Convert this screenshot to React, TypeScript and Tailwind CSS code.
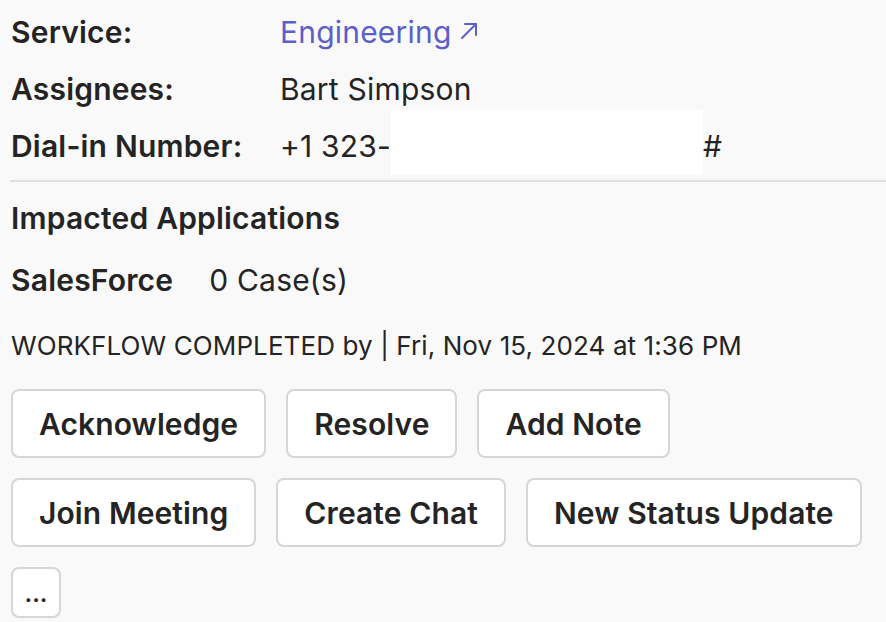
const font = { fontFamily: 'Inter, "Noto Sans", "Liberation Sans", sans-serif' }

function ActionButton({ label }: { label: string }) {
  return (
    <button className="h-[69px] px-[26px] rounded-[8px] border-2 border-[#d6d6d6] bg-white text-[30px] tracking-[0.1px] font-semibold text-[#242424] leading-none">
      {label}
    </button>
  )
}

export default function App() {
  return (
    <div className="w-[886px] h-[622px] overflow-hidden bg-[#f9f9f9] text-[#242424]" style={font}>
      {/* Details */}
      <div className="pt-[4px] pl-[11px] text-[30px] tracking-[0.2px]">
        <div className="flex items-center h-[57px]">
          <span className="w-[269px] font-semibold">Service:</span>
          <a className="flex items-center gap-[8px] text-[#5b5fc7]">
            Engineering
            <svg width="20" height="20" viewBox="0 0 20 20" fill="none" stroke="currentColor" strokeWidth="2" strokeLinecap="round" strokeLinejoin="round" className="mb-[4px]">
              <path d="M3 17L17 3" />
              <path d="M6 3H17V14" />
            </svg>
          </a>
        </div>
        <div className="flex items-center h-[57px]">
          <span className="w-[269px] font-semibold">Assignees:</span>
          <span>Bart Simpson</span>
        </div>
        <div className="flex items-center h-[57px]">
          <span className="w-[269px] font-semibold">Dial-in Number:</span>
          <span>+1 323-</span>
          <span className="w-[312px] h-[65px] bg-white self-start mt-[-8px]"></span>
          <span>#</span>
        </div>
      </div>

      <div className="ml-[10px] mt-[5px] h-[2px] bg-[#e0e0e0]"></div>

      {/* Impacted applications */}
      <div className="pl-[11px]">
        <div className="h-[72px] flex items-center text-[30px] tracking-[0.2px] font-semibold">Impacted Applications</div>
        <div className="h-[52px] flex items-center text-[30px] tracking-[0.2px] gap-[36px]">
          <span className="font-semibold">SalesForce</span>
          <span>0 Case(s)</span>
        </div>
        <div className="h-[78px] flex items-center text-[26px] tracking-[0.1px]">
          WORKFLOW COMPLETED by | Fri, Nov 15, 2024 at 1:36 PM
        </div>

        {/* Actions */}
        <div className="flex flex-col gap-[20px] mt-[5px]">
          <div className="flex gap-[20px]">
            <ActionButton label="Acknowledge" />
            <ActionButton label="Resolve" />
            <ActionButton label="Add Note" />
          </div>
          <div className="flex gap-[20px]">
            <ActionButton label="Join Meeting" />
            <ActionButton label="Create Chat" />
            <ActionButton label="New Status Update" />
          </div>
          <div className="flex">
            <button className="w-[50px] h-[51px] rounded-[8px] border-2 border-[#d6d6d6] bg-white text-[24px] font-semibold leading-none flex items-end justify-center pb-[10px]">
              ...
            </button>
          </div>
        </div>
      </div>
    </div>
  )
}
